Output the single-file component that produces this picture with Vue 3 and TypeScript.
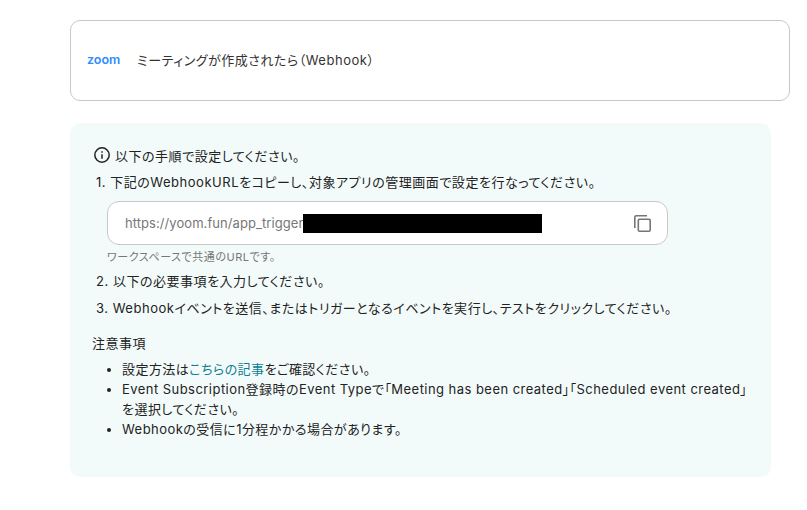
<script setup lang="ts">
const steps = [
  "以下の必要事項を入力してください。",
  "Webhookイベントを送信、またはトリガーとなるイベントを実行し、テストをクリックしてください。",
];
</script>

<template>
  <div class="page">
    <div class="app-card">
      <span class="zoom-logo">zoom</span>
      <span class="app-title">ミーティングが作成されたら（Webhook）</span>
    </div>

    <div class="guide">
      <div class="guide-head">
        <svg class="info-icon" viewBox="0 0 24 24" width="18" height="18" fill="none">
          <circle cx="12" cy="12" r="9.6" stroke="#222" stroke-width="2" />
          <rect x="11" y="11" width="2" height="6" fill="#222" />
          <rect x="11" y="7" width="2" height="2" fill="#222" />
        </svg>
        <span>以下の手順で設定してください。</span>
      </div>

      <div class="step step-first">1. 下記のWebhookURLをコピーし、対象アプリの管理画面で設定を行なってください。</div>
      <div class="url-box">
        <span class="url-text">https://yoom.fun/app_trigger</span>
        <span class="masked"></span>
        <svg class="copy-icon" viewBox="0 0 17 17" width="17" height="17" fill="none" stroke="#757575" stroke-width="1.6">
          <path d="M0.8 13V2.2A1.4 1.4 0 0 1 2.2 0.8H13" />
          <rect x="4.3" y="4.3" width="11.9" height="11.9" rx="1.2" />
        </svg>
      </div>
      <div class="url-note">ワークスペースで共通のURLです。</div>

      <div v-for="(s, i) in steps" :key="i" class="step">{{ i + 2 }}. {{ s }}</div>

      <div class="notes-title">注意事項</div>
      <ul class="notes">
        <li>設定方法は<a class="link">こちらの記事</a>をご確認ください。</li>
        <li>Event Subscription登録時のEvent Typeで「Meeting has been created」「Scheduled event created」を選択してください。</li>
        <li>Webhookの受信に1分程かかる場合があります。</li>
      </ul>
    </div>
  </div>
</template>

<style>
html,
body {
  margin: 0;
  background: #fff;
}
</style>

<style scoped>
.page {
  width: 807px;
  height: 510px;
  box-sizing: border-box;
  padding: 20px 17px 0 70px;
  overflow: hidden;
  font-family: Inter, "Noto Sans CJK JP", sans-serif;
  font-feature-settings: "palt";
  color: #333;
}

.app-card {
  display: flex;
  align-items: center;
  height: 81px;
  box-sizing: border-box;
  padding: 0 16px 2px;
  border: 1px solid #c8c8c8;
  border-radius: 10px;
  background: #fff;
}

.zoom-logo {
  width: 50px;
  font-size: 12.5px;
  font-weight: 600;
  color: #2d8cff;
}

.app-title {
  font-size: 13px;
  letter-spacing: 0.04em;
  color: #333;
}

.guide {
  width: 701px;
  height: 354px;
  box-sizing: border-box;
  margin-top: 22px;
  padding: 22px 18px 0 22px;
  border-radius: 10px;
  background: #f3fbfa;
  font-size: 13px;
  letter-spacing: 0.04em;
  color: #222;
}

.guide-head {
  display: flex;
  align-items: center;
  gap: 4px;
  height: 20px;
}

.info-icon {
  flex: none;
  margin-left: 1px;
}

.step {
  margin-top: 7px;
  padding-left: 4px;
  line-height: 20px;
}

.step-first {
  margin-top: 7px;
}

.url-box {
  display: flex;
  align-items: center;
  width: 561px;
  height: 44px;
  box-sizing: border-box;
  margin: 9px 0 0 15px;
  padding: 0 16px 0 17px;
  border: 1px solid #c8c8c8;
  border-radius: 12px;
  background: #fff;
}

.url-text {
  font-size: 13px;
  letter-spacing: 0.005em;
  color: #777;
}

.masked {
  width: 239px;
  height: 19px;
  background: #000;
}

.copy-icon {
  margin-left: auto;
}

.url-note {
  margin: 6px 0 0 15px;
  font-size: 11px;
  letter-spacing: 0.05em;
  line-height: 13px;
  color: #777;
}

.notes-title {
  margin-top: 15px;
  line-height: 20px;
}

.notes {
  margin: 6px 0 0;
  padding: 0 0 0 30px;
  letter-spacing: 0.035em;
}

.notes li {
  line-height: 20px;
}

.link {
  color: #0f7f94;
}
</style>
